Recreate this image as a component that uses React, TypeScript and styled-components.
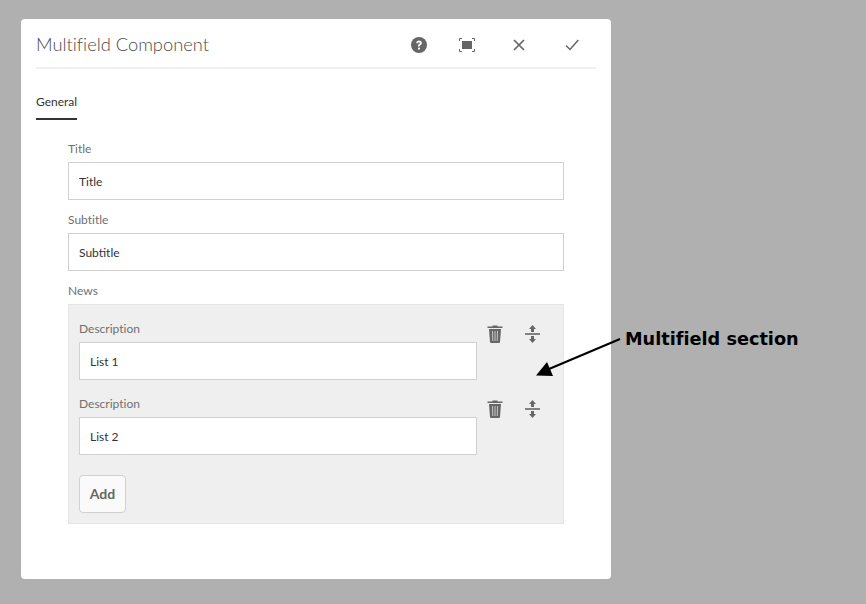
import styled, { createGlobalStyle } from 'styled-components';

const GlobalStyle = createGlobalStyle`
  html, body {
    margin: 0;
    padding: 0;
    background: #b0b0b0;
    font-family: Lato, 'Open Sans', sans-serif;
    font-variant-ligatures: none;
  }
`;

const HelpIcon = () => (
  <svg width="16" height="16" viewBox="0 0 16 16">
    <circle cx="8" cy="8" r="8" fill="#666" />
    <path d="M5.3 6.2C5.4 4.6 6.5 3.6 8.1 3.6c1.6 0 2.7 1 2.7 2.3 0 1-.5 1.6-1.3 2.1-.6.4-.8.7-.8 1.3v.3H7V9c0-1 .4-1.6 1.1-2 .5-.3.8-.6.8-1 0-.5-.4-.8-.9-.8-.6 0-1 .4-1 1z" fill="#fff" />
    <rect x="7" y="10.6" width="1.9" height="1.9" fill="#fff" />
  </svg>
);

const FullscreenIcon = () => (
  <svg width="16" height="14" viewBox="0 0 16 14">
    <rect x="3" y="3" width="10" height="8" fill="#666" />
    <path d="M.5 3V.5H3M13 .5h2.5V3M15.5 11v2.5H13M3 13.5H.5V11" fill="none" stroke="#666" />
  </svg>
);

const CloseIcon = () => (
  <svg width="12" height="12" viewBox="0 0 12 12">
    <path d="M1 1l10 10M11 1L1 11" fill="none" stroke="#666" strokeWidth="1.7" />
  </svg>
);

const CheckIcon = () => (
  <svg width="14" height="12" viewBox="0 0 14 12">
    <path d="M1 6.5l4 4L13.3 1" fill="none" stroke="#666" strokeWidth="1.5" />
  </svg>
);

const TrashIcon = () => (
  <svg width="16" height="18" viewBox="0 0 16 18">
    <path d="M5.5 1.5V.5h5v1H15.500V3H.5V1.500z" fill="#666" />
    <path d="M2 4h12l-1 13a1 1 0 0 1-1 1H4a1 1 0 0 1-1-1z" fill="#666" />
    <path d="M5.500 6l.3 10M8 6v10M10.500 6l-.3 10" stroke="#c9c9c9" strokeWidth="1" fill="none" />
  </svg>
);

const MoveIcon = () => (
  <svg width="15" height="18" viewBox="0 0 15 18">
    <path d="M7.500 0L11 4H9v3H6V4H4zM7.500 18L11 14H9v-3H6v3H4z" fill="#666" />
    <rect x="0" y="8.200" width="15" height="1.600" fill="#666" />
  </svg>
);

const Arrow = () => (
  <ArrowSvg width="90" height="40" viewBox="0 0 90 40">
    <path d="M85 1L14 31" stroke="#000" strokeWidth="2" fill="none" />
    <path d="M1 37.500L12 24L18 38z" fill="#000" />
  </ArrowSvg>
);

const Field = ({ label, value }: { label: string; value: string }) => (
  <FieldGroup>
    <Label>{label}</Label>
    <Input readOnly value={value} />
  </FieldGroup>
);

const App = () => {
  return (
    <Page>
      <GlobalStyle />
      <Dialog>
        <Header>
          <Title>Multifield Component</Title>
          <Actions>
            <ActionSlot $width={47}><HelpIcon /></ActionSlot>
            <ActionSlot $width={49}><FullscreenIcon /></ActionSlot>
            <ActionSlot $width={55}><CloseIcon /></ActionSlot>
            <ActionSlot $width={51}><CheckIcon /></ActionSlot>
          </Actions>
        </Header>
        <Tabs>
          <Tab>General</Tab>
        </Tabs>
        <Form>
          <Field label="Title" value="Title" />
          <Field label="Subtitle" value="Subtitle" />
          <Label>News</Label>
          <Panel>
            {['List 1', 'List 2'].map((item) => (
              <Row key={item}>
                <RowField>
                  <Label>Description</Label>
                  <Input readOnly value={item} />
                </RowField>
                <RowIcons>
                  <TrashIcon />
                  <MoveIcon />
                </RowIcons>
              </Row>
            ))}
            <AddButton>Add</AddButton>
          </Panel>
        </Form>
      </Dialog>
      <Callout>
        <Arrow />
        <CalloutText>Multifield section</CalloutText>
      </Callout>
    </Page>
  );
};

export default App;

const Page = styled.div`
  position: relative;
  width: 866px;
  height: 604px;
  box-sizing: border-box;
  padding: 19px 0 0 21px;
  overflow: hidden;
`;

const Dialog = styled.div`
  width: 590px;
  height: 560px;
  background: #fff;
  border-radius: 4px;
`;

const Header = styled.div`
  display: flex;
  align-items: center;
  justify-content: space-between;
  height: 48px;
  margin: 0 15px;
  border-bottom: 2px solid #f0f0f0;
`;

const Title = styled.h1`
  margin: 2px 0 0;
  font-size: 18.3px;
  font-weight: 300;
  color: #4b4b4b;
`;

const Actions = styled.div`
  display: flex;
  align-items: center;
  margin: 4px -1px 0 0;
`;

const ActionSlot = styled.span<{ $width: number }>`
  display: flex;
  align-items: center;
  justify-content: center;
  width: ${({ $width }) => $width}px;
`;

const Tabs = styled.div`
  display: flex;
  margin: 0 15px;
  height: 51px;
  align-items: flex-end;
`;

const Tab = styled.div`
  box-sizing: border-box;
  width: 41px;
  height: 38px;
  padding-top: 11px;
  font-size: 12px;
  line-height: 18px;
  color: #333;
  white-space: nowrap;
  border-bottom: 2px solid #333;
`;

const Form = styled.div`
  display: flex;
  flex-direction: column;
  width: 496px;
  margin: 20px 0 0 47px;
`;

const FieldGroup = styled.div`
  display: flex;
  flex-direction: column;
  margin-bottom: 11px;
`;

const Label = styled.label`
  display: block;
  height: 22px;
  font-size: 12px;
  line-height: 18px;
  color: #707070;
`;

const Input = styled.input`
  box-sizing: border-box;
  width: 100%;
  height: 38px;
  padding: 0 10px;
  border: 1px solid #d0d0d0;
  border-radius: 0;
  outline: none;
  background: #fff;
  font-family: inherit;
  font-size: 12px;
  color: #333;
`;

const Panel = styled.div`
  display: flex;
  flex-direction: column;
  box-sizing: border-box;
  height: 220px;
  padding: 15px 10px 0;
  background: #efefef;
  border: 1px solid #e6e6e6;
`;

const Row = styled.div`
  display: flex;
  align-items: flex-start;
  margin-bottom: 15px;
`;

const RowField = styled.div`
  width: 398px;
`;

const RowIcons = styled.div`
  display: flex;
  align-items: center;
  gap: 22px;
  padding: 5px 0 0 10px;
`;

const AddButton = styled.button`
  width: 47px;
  height: 38px;
  margin-top: 5px;
  padding: 0 0 2px;
  background: #fafafa;
  border: 1px solid #d0d0d0;
  border-radius: 4px;
  font-family: inherit;
  font-size: 14px;
  font-weight: 700;
  color: #666;
`;

const Callout = styled.div`
  position: absolute;
  left: 535px;
  top: 327px;
  display: flex;
  align-items: flex-start;
`;

const ArrowSvg = styled.svg`
  margin-top: 11px;
`;

const CalloutText = styled.span`
  font-family: 'DejaVu Sans', Verdana, sans-serif;
  font-size: 17.7px;
  font-weight: 700;
  line-height: 24px;
  color: #000;
  white-space: nowrap;
`;
